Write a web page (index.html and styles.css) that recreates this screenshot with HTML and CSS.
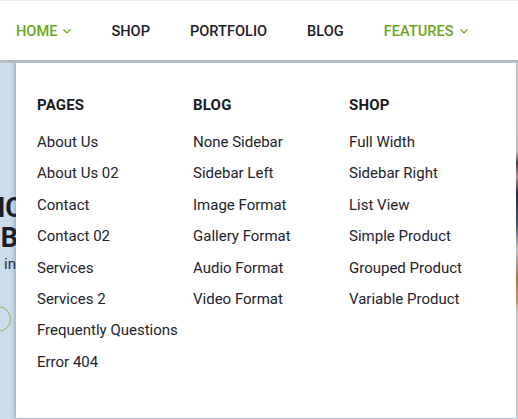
FILE: index.html
```html
<!DOCTYPE html>
<html>
<head>
<meta charset="utf-8">
<link rel="stylesheet" href="styles.css">
</head>
<body>
<header class="header">
  <nav class="nav">
    <a class="nav-item active">HOME <svg class="chev" viewBox="0 0 8 5" width="8" height="5"><path d="M0.5 0.5 L4 4 L7.5 0.5" fill="none" stroke="currentColor" stroke-width="1.2"/></svg></a>
    <a class="nav-item">SHOP</a>
    <a class="nav-item">PORTFOLIO</a>
    <a class="nav-item">BLOG</a>
    <a class="nav-item active">FEATURES <svg class="chev" viewBox="0 0 8 5" width="8" height="5"><path d="M0.5 0.5 L4 4 L7.5 0.5" fill="none" stroke="currentColor" stroke-width="1.2"/></svg></a>
  </nav>
</header>
<section class="hero">
  <div class="hero-inner">
    <h1 class="hero-title"><span class="l1">MUSIC</span><span class="l2">CLUB</span></h1>
    <p class="hero-sub">Sound in</p>
    <span class="hero-btn"></span>
  </div>
  <div class="hero-image"></div>
  <div class="mega">
    <div class="col">
      <h3 class="col-title">PAGES</h3>
      <ul class="list">
        <li>About Us</li>
        <li>About Us 02</li>
        <li>Contact</li>
        <li>Contact 02</li>
        <li>Services</li>
        <li>Services 2</li>
        <li>Frequently Questions</li>
        <li>Error 404</li>
      </ul>
    </div>
    <div class="col">
      <h3 class="col-title">BLOG</h3>
      <ul class="list">
        <li>None Sidebar</li>
        <li>Sidebar Left</li>
        <li>Image Format</li>
        <li>Gallery Format</li>
        <li>Audio Format</li>
        <li>Video Format</li>
      </ul>
    </div>
    <div class="col">
      <h3 class="col-title">SHOP</h3>
      <ul class="list">
        <li>Full Width</li>
        <li>Sidebar Right</li>
        <li>List View</li>
        <li>Simple Product</li>
        <li>Grouped Product</li>
        <li>Variable Product</li>
      </ul>
    </div>
  </div>
</section>
</body>
</html>
```

FILE: styles.css
```css
* { box-sizing: border-box; }
html, body { margin: 0; padding: 0; }
body {
  width: 518px;
  height: 419px;
  overflow: hidden;
  font-family: Roboto, "Liberation Sans", sans-serif;
  background: #fff;
}
.header {
  height: 60px;
  background: #fff;
  border-top: 1px solid #ececec;
  display: flex;
  align-items: center;
  padding-left: 16px;
  position: relative;
  z-index: 3;
  box-shadow: 0 1px 3px rgba(0,0,0,0.08);
}
.nav {
  display: flex;
  align-items: center;
  gap: 40px;
}
.nav-item {
  font-size: 14.6px;
  font-weight: 500;
  color: #1d1d27;
  display: flex;
  align-items: center;
  gap: 6px;
}
.nav-item.active { color: #6aa61c; }
.chev { margin-top: 1px; }
.hero {
  position: relative;
  height: 359px;
  background: #cbddec;
  border-top: 3px solid #b9c3cc;
  overflow: hidden;
}
.hero-inner {
  margin-left: -107px;
  padding-top: 130px;
  width: 130px;
}
.hero-title {
  margin: 0;
  font-size: 27px;
  line-height: 30px;
  font-weight: 700;
  color: #1d1d2a;
  text-align: right;
  white-space: nowrap;
}
.hero-title span { display: block; }
.hero-title .l2 { padding-right: 5px; }
.hero-sub {
  margin: 2px 0 0;
  font-size: 15px;
  line-height: 18px;
  color: #2a2a33;
  text-align: right;
  white-space: nowrap;
  padding-right: 7px;
}
.hero-btn {
  display: block;
  margin: 33px 12px 0 auto;
  width: 100px;
  height: 26px;
  border: 1.5px solid #7fbc4a;
  border-radius: 13px;
}
.hero-image {
  position: absolute;
  right: 0;
  top: 0;
  width: 3px;
  height: 100%;
  background: linear-gradient(#c8c8c8 0%, #c5c5c5 25%, #4b3a42 28%, #c98a9c 32%, #2a3040 36%, #35507a 45%, #c8c8c8 52%, #b87946 60%, #d69a60 67%, #cfcfcf 70%, #d0d0d0 100%);
}
.mega {
  position: absolute;
  top: -2px;
  left: 16px;
  width: 500px;
  height: 357px;
  background: #fff;
  box-shadow: -2px 0 4px rgba(60, 80, 100, 0.25), 0 1px 2px rgba(0,0,0,0.12);
  display: flex;
  padding: 34px 0 0 21px;
}
.col { width: 156px; }
.col-title {
  margin: 0 0 12px;
  font-size: 15px;
  font-weight: 700;
  color: #1a1a24;
  letter-spacing: 0.2px;
  line-height: 20px;
}
.list {
  list-style: none;
  margin: 0;
  padding: 0;
}
.list li {
  font-size: 15px;
  line-height: 31.4px;
  color: #23232d;
  white-space: nowrap;
}
```
